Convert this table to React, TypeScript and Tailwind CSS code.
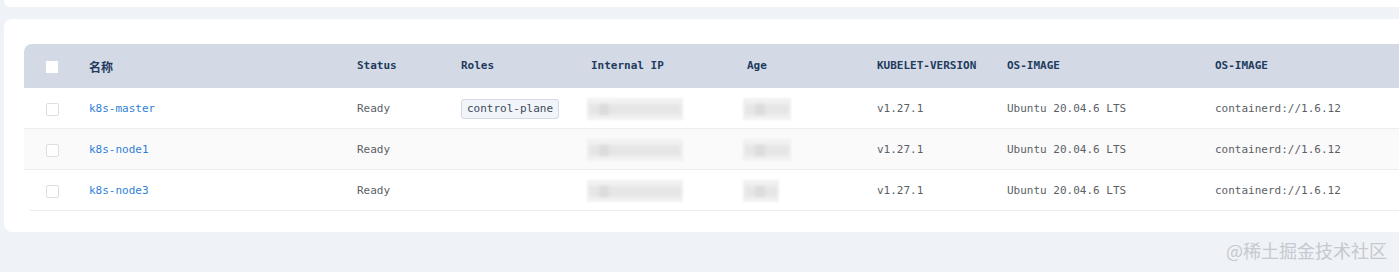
import React from "react";

const cols = "grid grid-cols-[65px_268px_104px_130px_156px_130px_130px_208px_1fr]";

type Row = { name: string; roles?: string; ipW: number; ageW: number; bg: string };

const rows: Row[] = [
  { name: "k8s-master", roles: "control-plane", ipW: 96, ageW: 48, bg: "bg-white" },
  { name: "k8s-node1", ipW: 96, ageW: 48, bg: "bg-[#fafafa]" },
  { name: "k8s-node3", ipW: 96, ageW: 36, bg: "bg-white" },
];

function Blur({ w }: { w: number }) {
  return (
    <div className="relative h-[22px]" style={{ width: w }}>
      <div className="absolute inset-0 bg-[#f1f1f1] blur-[1px]" />
      <div className="absolute left-[2px] right-[2px] top-[6px] h-[11px] bg-[#e6e6e6] blur-[1.5px]" />
      <div className="absolute left-[12px] top-[6px] h-[11px] w-[10px] bg-[#dcdcdc] blur-[1.5px]" />
    </div>
  );
}

export default function App() {
  return (
    <div
      className="w-[1399px] h-[272px] overflow-hidden bg-[#eff2f7] relative text-[11px]"
      style={{ fontFamily: '"DejaVu Sans Mono", "Noto Sans CJK SC", monospace' }}
    >
      <div className="ml-[4px] mr-[-20px] h-[7px] bg-white rounded-b-[6px]" />
      <div className="ml-[4px] mr-[-20px] mt-[12px] h-[213px] bg-white rounded-[8px] pl-[20px] pt-[25px]">
        <div className={`${cols} h-[44px] pt-[1px] items-center bg-[#d4dae5] rounded-tl-[8px] text-[#223a5e] font-bold`}>
          <div className="pl-[22px]">
            <div className="w-[12px] h-[12px] bg-white" />
          </div>
          <div style={{ fontFamily: '"Noto Sans CJK SC", sans-serif' }} className="text-[12px]">名称</div>
          <div>Status</div>
          <div>Roles</div>
          <div>Internal IP</div>
          <div>Age</div>
          <div>KUBELET-VERSION</div>
          <div>OS-IMAGE</div>
          <div>OS-IMAGE</div>
        </div>
        {rows.map((r, i) => (
          <div
            key={r.name}
            className={`${cols} h-[41px] pt-[2px] items-center ${r.bg} text-[#5a5f66] border-b border-[#ebedf0] ${i === rows.length - 1 ? "ml-[6px]" : ""}`}
            style={i === rows.length - 1 ? { gridTemplateColumns: "59px 268px 104px 130px 156px 130px 130px 208px 1fr" } : undefined}
          >
            <div className={i === rows.length - 1 ? "pl-[16px]" : "pl-[22px]"}>
              <div className="w-[13px] h-[13px] bg-white border border-[#dcdfe6] rounded-[2px]" />
            </div>
            <div className="text-[#2f7fd8]">{r.name}</div>
            <div>Ready</div>
            <div>
              {r.roles && (
                <span className="inline-block h-[20px] leading-[18px] px-[5px] bg-[#f1f4f8] border border-[#d3d9e2] rounded-[3px] text-[#3c4a5c]">
                  {r.roles}
                </span>
              )}
            </div>
            <div className="-ml-[4px]">
              <Blur w={r.ipW} />
            </div>
            <div className="-ml-[4px]">
              <Blur w={r.ageW} />
            </div>
            <div>v1.27.1</div>
            <div>Ubuntu 20.04.6 LTS</div>
            <div>containerd://1.6.12</div>
          </div>
        ))}
      </div>
      <div
        className="absolute right-[12px] bottom-[13px] text-[18px] text-[#c6c9ce] leading-none"
        style={{ fontFamily: '"Noto Sans CJK SC", sans-serif' }}
      >
        @稀土掘金技术社区
      </div>
    </div>
  );
}
